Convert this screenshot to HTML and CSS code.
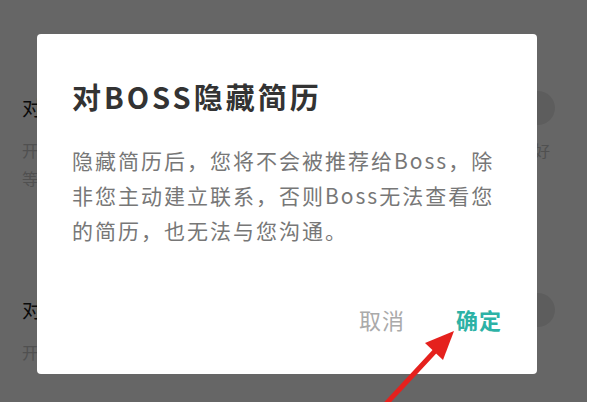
FILE: index.html
```html
<!DOCTYPE html>
<html lang="zh-CN">
<head>
  <meta charset="UTF-8" />
  <meta name="viewport" content="width=device-width, initial-scale=1.0"/>
  <title>隐私设置</title>
  <link rel="stylesheet" href="styles.css">
</head>
<body>

  <div class="screen">
    <!-- settings list under the dialog -->
    <div class="settings">
      <div class="setting-row">
        <div class="setting-head">
          <span class="setting-title">对BOSS隐藏简历</span>
          <span class="switch"><span class="knob"></span></span>
        </div>
        <div class="setting-desc">开启后，您的简历将对招聘者隐藏，仅在主动沟通时才展示，保护隐私更好</div>
        <div class="setting-desc">等个人信息均不会被公开</div>
      </div>
      <div class="setting-row second">
        <div class="setting-head">
          <span class="setting-title">对猎头隐藏简历</span>
          <span class="switch"><span class="knob"></span></span>
        </div>
        <div class="setting-desc">开启后，猎头将无法查看您的简历</div>
      </div>
    </div>

    <!-- DIALOG -->
    <div class="mask">
      <div class="dialog">
        <h3 class="dialog-title">对BOSS隐藏简历</h3>
        <p class="dialog-text">隐藏简历后，您将不会被推荐给Boss，除非您主动建立联系，否则Boss无法查看您的简历，也无法与您沟通。</p>
        <div class="dialog-actions">
          <button class="btn btn-cancel">取消</button>
          <button class="btn btn-ok">确定</button>
        </div>
      </div>
    </div>

    <!-- red pointer to the confirm button -->
    <svg class="pointer" width="587" height="402" viewBox="0 0 587 402">
      <line x1="384" y1="406" x2="436" y2="350" stroke="#e5211d" stroke-width="5" stroke-linecap="round"/>
      <polygon points="454,331 425,343 443,360" fill="#e5211d"/>
    </svg>
  </div>

</body>
</html>
```

FILE: styles.css
```css
* {
  box-sizing: border-box;
}

body {
  margin: 0;
  padding: 0;
  background-color: #fff;
  font-family: 'Noto Sans CJK SC', 'Noto Sans', sans-serif;
}

.screen {
  position: relative;
  width: 587px;
  height: 402px;
  overflow: hidden;
  background-color: #fff;
}

/* settings page */
.settings {
  padding: 94px 32px 0 22px;
}

.setting-row.second {
  margin-top: 104px;
}

.setting-head {
  display: flex;
  justify-content: space-between;
  align-items: center;
  height: 28px;
}

.setting-title {
  font-size: 20px;
  line-height: 28px;
  color: #1a1a1a;
}

.switch {
  display: flex;
  align-items: center;
  width: 54px;
  height: 34px;
  border-radius: 17px;
  background-color: #e9e9e9;
  padding: 2px;
}

.knob {
  width: 30px;
  height: 30px;
  border-radius: 50%;
  background-color: #fff;
  box-shadow: 0 1px 4px rgba(0, 0, 0, 0.25);
}

.setting-desc {
  font-size: 16px;
  line-height: 28px;
  color: #c8c8c8;
  white-space: nowrap;
}

.setting-head + .setting-desc {
  margin-top: 14px;
}

/* dialog */
.mask {
  position: absolute;
  top: 0;
  left: 0;
  width: 100%;
  height: 100%;
  background-color: rgba(0, 0, 0, 0.6);
  padding: 34px 0 0 37px;
}

.dialog {
  width: 500px;
  height: 340px;
  background-color: #fff;
  border-radius: 4px;
  padding: 42px 35px 40px;
  display: flex;
  flex-direction: column;
}

.dialog-title {
  margin: 0;
  font-size: 29px;
  line-height: 40px;
  font-weight: bold;
  letter-spacing: 3px;
  color: #333;
}

.dialog-text {
  margin: 27px 0 0;
  font-size: 21px;
  line-height: 35px;
  letter-spacing: 2px;
  color: #777;
}

.dialog-actions {
  margin-top: auto;
  display: flex;
  justify-content: flex-end;
  gap: 51px;
}

.btn {
  padding: 0;
  border: none;
  background: none;
  font-family: inherit;
  font-size: 22px;
  line-height: 30px;
  letter-spacing: 1px;
  cursor: pointer;
}

.btn-cancel {
  color: #aaa;
}

.btn-ok {
  color: #2db2a6;
  font-weight: bold;
}

.pointer {
  position: absolute;
  top: 0;
  left: 0;
  pointer-events: none;
}
```
